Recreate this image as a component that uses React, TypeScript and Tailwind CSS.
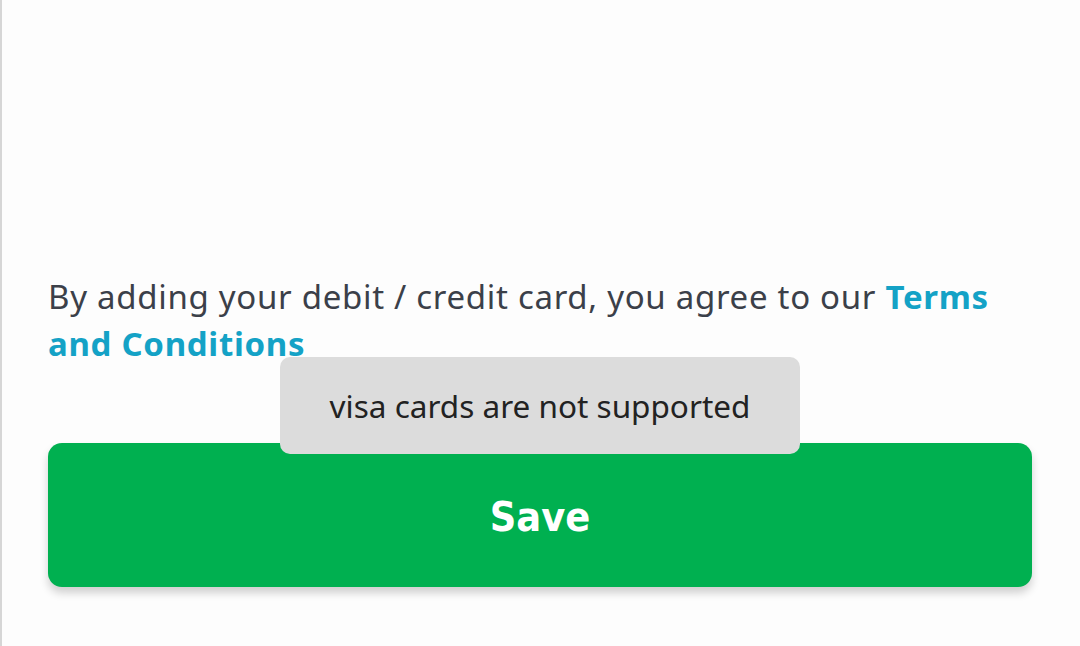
import React from "react";

const App = () => {
  return (
    <div className="relative h-[646px] w-full overflow-hidden bg-[#fdfdfd] border-l-2 border-[#d6d6d6]">
      <div className="flex h-full flex-col justify-end pl-[46px] pr-[48px] pb-[59px]">
        <p className="font-['Noto_Sans',sans-serif] text-[33px] leading-[47px] tracking-[0.7px] text-[#3b4049]">
          By adding your debit / credit card, you agree to our{" "}
          <span className="font-bold text-[#14a2c6]">Terms and Conditions</span>
        </p>
        <button className="mt-[76px] flex h-[144px] w-full items-center justify-center rounded-[14px] bg-[#00b050] pt-[6px] shadow-[0_6px_8px_rgba(0,0,0,0.18)]">
          <span className="font-['DejaVu_Sans_Condensed','DejaVu_Sans',sans-serif] text-[41px] font-bold text-white">
            Save
          </span>
        </button>
      </div>

      {/* toast */}
      <div className="absolute left-[278px] top-[357px] flex h-[97px] w-[520px] items-center justify-center rounded-[10px] bg-[#dcdcdc]">
        <span className="font-['Noto_Sans',sans-serif] text-[31.5px] text-[#222]">visa cards are not supported</span>
      </div>
    </div>
  );
};

export default App;
